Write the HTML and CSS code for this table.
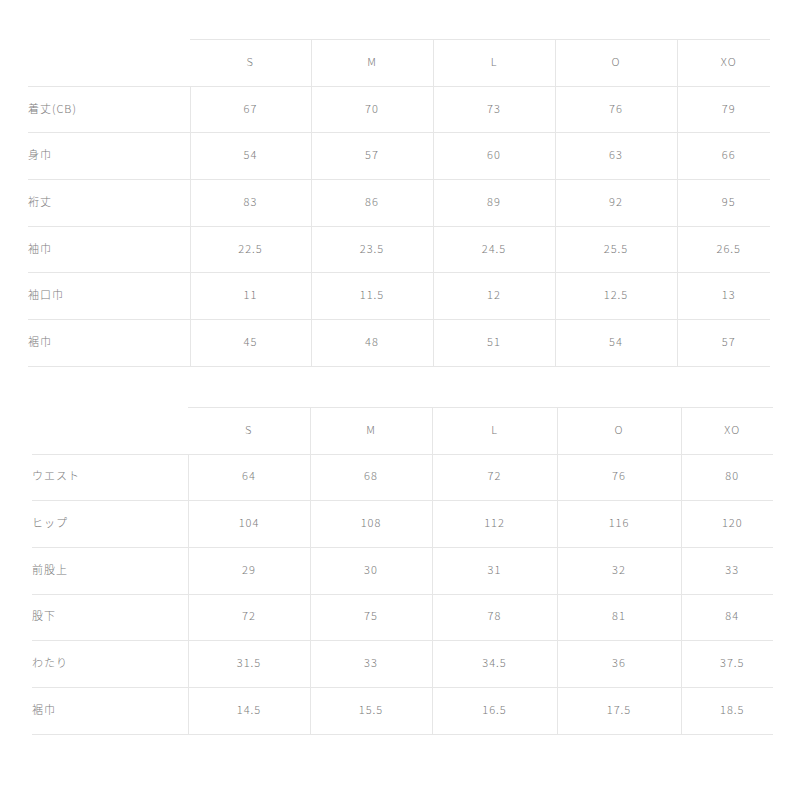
FILE: index.html
```html
<!DOCTYPE html>
<html lang="ja">
<head>
<meta charset="utf-8">
<link rel="stylesheet" href="styles.css">
</head>
<body>
<div class="page">
  <table class="size-table t1">
    <colgroup><col class="c-label"><col class="c1"><col class="c2"><col class="c3"><col class="c4"><col class="c5"></colgroup>
    <thead>
      <tr><th class="label"></th><th>S</th><th>M</th><th>L</th><th>O</th><th class="last">XO</th></tr>
    </thead>
    <tbody>
      <tr><td class="label">着丈(CB)</td><td>67</td><td>70</td><td>73</td><td>76</td><td class="last">79</td></tr>
      <tr><td class="label">身巾</td><td>54</td><td>57</td><td>60</td><td>63</td><td class="last">66</td></tr>
      <tr><td class="label">裄丈</td><td>83</td><td>86</td><td>89</td><td>92</td><td class="last">95</td></tr>
      <tr><td class="label">袖巾</td><td>22.5</td><td>23.5</td><td>24.5</td><td>25.5</td><td class="last">26.5</td></tr>
      <tr><td class="label">袖口巾</td><td>11</td><td>11.5</td><td>12</td><td>12.5</td><td class="last">13</td></tr>
      <tr><td class="label">裾巾</td><td>45</td><td>48</td><td>51</td><td>54</td><td class="last">57</td></tr>
    </tbody>
  </table>

  <table class="size-table t2">
    <colgroup><col class="c-label"><col class="c1"><col class="c2"><col class="c3"><col class="c4"><col class="c5"></colgroup>
    <thead>
      <tr><th class="label"></th><th>S</th><th>M</th><th>L</th><th>O</th><th class="last">XO</th></tr>
    </thead>
    <tbody>
      <tr><td class="label">ウエスト</td><td>64</td><td>68</td><td>72</td><td>76</td><td class="last">80</td></tr>
      <tr><td class="label">ヒップ</td><td>104</td><td>108</td><td>112</td><td>116</td><td class="last">120</td></tr>
      <tr><td class="label">前股上</td><td>29</td><td>30</td><td>31</td><td>32</td><td class="last">33</td></tr>
      <tr><td class="label">股下</td><td>72</td><td>75</td><td>78</td><td>81</td><td class="last">84</td></tr>
      <tr><td class="label">わたり</td><td>31.5</td><td>33</td><td>34.5</td><td>36</td><td class="last">37.5</td></tr>
      <tr><td class="label">裾巾</td><td>14.5</td><td>15.5</td><td>16.5</td><td>17.5</td><td class="last">18.5</td></tr>
    </tbody>
  </table>
</div>
</body>
</html>
```

FILE: styles.css
```css
html, body {
  margin: 0;
  padding: 0;
  background: #ffffff;
}

.page {
  padding-top: 39px;
  display: flex;
  flex-direction: column;
  gap: 40px;
}

.size-table {
  border-collapse: collapse;
  table-layout: fixed;
  font-family: "Noto Sans CJK JP", "Noto Sans", sans-serif;
  font-weight: 300;
  font-size: 11px;
  letter-spacing: 1px;
  color: #7d7d7d;
}

.size-table th,
.size-table td {
  height: 41.7px;
  padding: 0 0 4px 0;
  text-align: center;
  vertical-align: middle;
  font-weight: 300;
  border-bottom: 1px solid #e6e6e6;
  border-left: 1px solid #e6e6e6;
}

.size-table th {
  border-top: 1px solid #e6e6e6;
}

.size-table th.label {
  border-top: none;
  border-left: none;
}

.size-table td.label {
  border-left: none;
  text-align: left;
}

.size-table th:nth-child(2) {
  border-left: none;
}

.size-table .last {
  padding-left: 10px;
}

.t1 {
  margin-left: 28px;
  width: 742px;
}
.t1 .c-label { width: 162px; }
.t1 .c1 { width: 121px; }
.t1 .c2 { width: 122px; }
.t1 .c3 { width: 122px; }
.t1 .c4 { width: 122px; }
.t1 .c5 { width: 93px; }

.t2 {
  margin-left: 32px;
  width: 741px;
}
.t2 .c-label { width: 156px; }
.t2 .c1 { width: 122px; }
.t2 .c2 { width: 122px; }
.t2 .c3 { width: 125px; }
.t2 .c4 { width: 124px; }
.t2 .c5 { width: 92px; }
```
